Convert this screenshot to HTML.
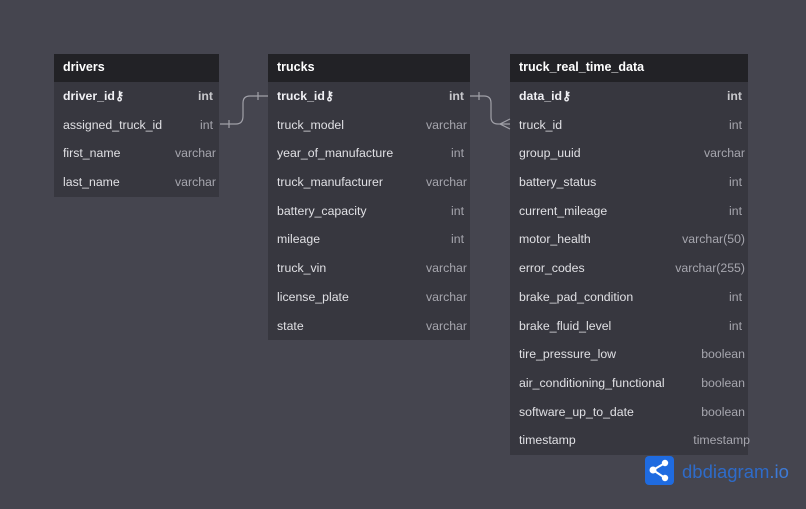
<!DOCTYPE html><html><head><style>
body{margin:0;width:806px;height:509px;background:#45454f;position:relative;overflow:hidden;font-family:"Liberation Sans","Noto Sans CJK JP",sans-serif;font-size:12px;color:#e6e6ea}
.t{position:absolute;top:54px;background:#37373f}
.h{height:28px;background:#222226;font-weight:bold;line-height:27px;padding-left:9px;color:#fff;font-size:12.5px}
.r{height:28.7px;line-height:28.7px;padding-left:9px;position:relative;white-space:nowrap;color:#e0e0e4;font-size:12.3px}
.r span{position:absolute;right:3px;top:0;color:#a6a6ae}
.b{font-weight:bold;color:#f0f0f4}.b span{color:#c8c8cc;font-weight:bold;right:6px}
</style></head><body>
<div class="t" style="left:54px;width:165px"><div class="h">drivers</div>
<div class="r b">driver_id⚷<span>int</span></div><div class="r">assigned_truck_id<span style="right:6px">int</span></div><div class="r">first_name<span>varchar</span></div><div class="r">last_name<span>varchar</span></div></div>
<div class="t" style="left:268px;width:202px"><div class="h">trucks</div>
<div class="r b">truck_id⚷<span>int</span></div><div class="r">truck_model<span>varchar</span></div><div class="r">year_of_manufacture<span style="right:6px">int</span></div><div class="r">truck_manufacturer<span>varchar</span></div><div class="r">battery_capacity<span style="right:6px">int</span></div><div class="r">mileage<span style="right:6px">int</span></div><div class="r">truck_vin<span>varchar</span></div><div class="r">license_plate<span>varchar</span></div><div class="r">state<span>varchar</span></div></div>
<div class="t" style="left:510px;width:238px"><div class="h">truck_real_time_data</div>
<div class="r b">data_id⚷<span>int</span></div><div class="r">truck_id<span style="right:6px">int</span></div><div class="r">group_uuid<span>varchar</span></div><div class="r">battery_status<span style="right:6px">int</span></div><div class="r">current_mileage<span style="right:6px">int</span></div><div class="r">motor_health<span>varchar(50)</span></div><div class="r">error_codes<span>varchar(255)</span></div><div class="r">brake_pad_condition<span style="right:6px">int</span></div><div class="r">brake_fluid_level<span style="right:6px">int</span></div><div class="r">tire_pressure_low<span>boolean</span></div><div class="r">air_conditioning_functional<span>boolean</span></div><div class="r">software_up_to_date<span>boolean</span></div><div class="r">timestamp<span style="right:-2px">timestamp</span></div></div>
<svg width="806" height="509" style="position:absolute;left:0;top:0">
<g fill="none" stroke="#a0a0a8" stroke-width="1.2">
<path d="M220 124 H236 Q243 124 243 116 V103 Q243 96 250 96 H268"/>
<path d="M229 120 V128 M258 92 V100"/>
<path d="M470 96 H484 Q491 96 491 103 V117 Q491 124 498 124 H510"/>
<path d="M479 92 V100 M510 119 L500 124 L510 129"/>
</g>
<rect x="645" y="456" width="29" height="29" rx="4" fill="#1f6be0"/>
<g stroke="#fff" stroke-width="2"><line x1="653" y1="470" x2="665" y2="463"/><line x1="653" y1="470" x2="665" y2="478"/></g>
<g fill="#fff"><circle cx="653" cy="470" r="3.5"/><circle cx="665" cy="463" r="3.2"/><circle cx="665" cy="478" r="3.2"/></g>
<text x="682" y="478" font-family="Liberation Sans,sans-serif" font-size="18.5" fill="#2e6bc9">dbdiagram<tspan fill="#3d7ad6">.io</tspan></text>
</svg>
</body></html>
